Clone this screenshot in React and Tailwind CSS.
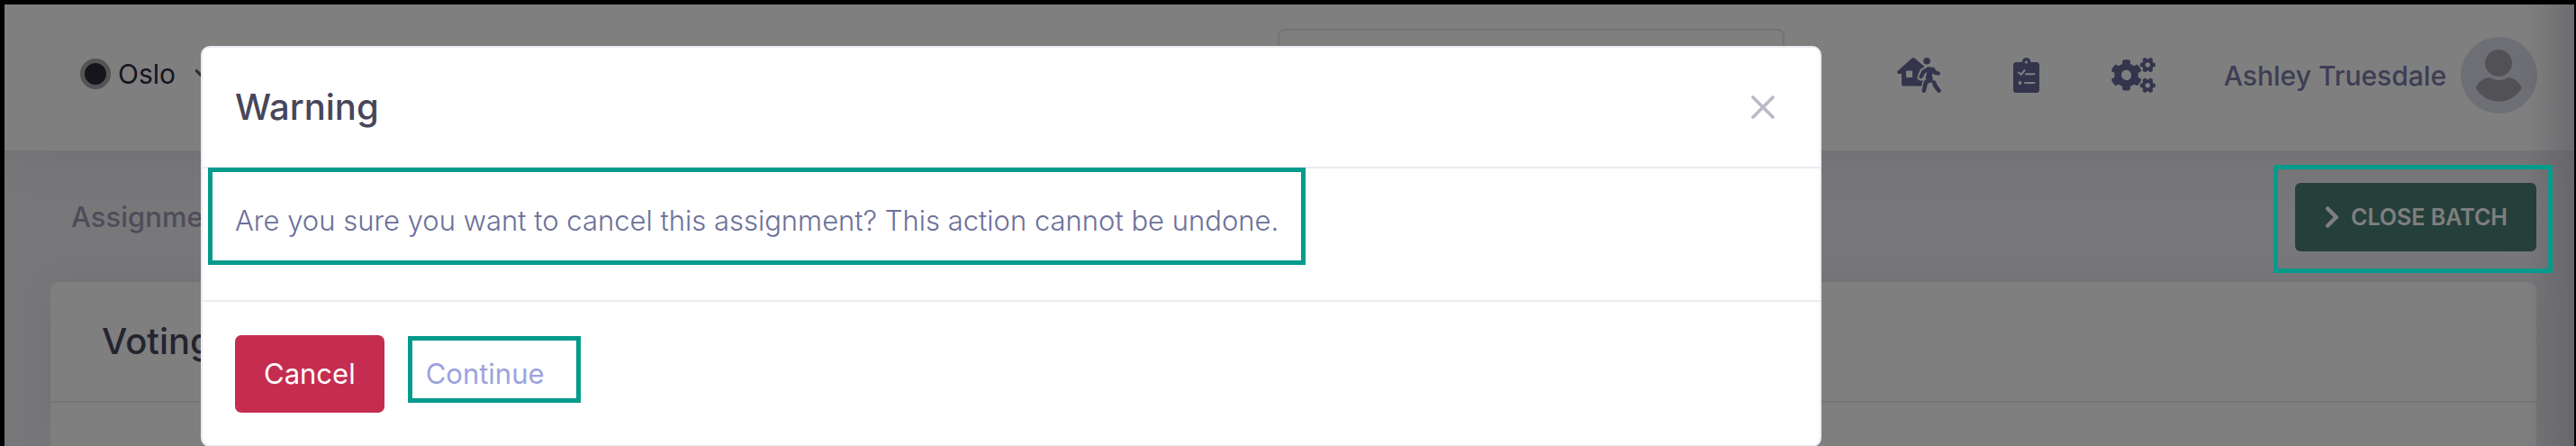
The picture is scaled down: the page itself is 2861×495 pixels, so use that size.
// App.jsx
import { FaCogs, FaChevronDown, FaChevronRight } from 'react-icons/fa';

function HouseLeaveIcon() {
    return (
        <svg viewBox="0 0 49 39" className="w-[49px] h-[39px]" aria-hidden="true">
            <path
                fill="currentColor"
                fillRule="evenodd"
                d="M16.6 0.6 Q18 -0.6 19.4 0.6 L30 9.6 V31.5 H7.5 Q5 31.5 5 29 V18 H2 Q-1.2 17.4 0.6 14.8 Z M11 14.5 Q10 14.5 10 15.5 V21 Q10 22 11 22 H16 Q17 22 17 21 V15.5 Q17 14.5 16 14.5 Z"
            />
            {/* contorno claro que separa la persona de la casa */}
            <g fill="none" stroke="#fff" strokeWidth="8" strokeLinecap="round" strokeLinejoin="round">
                <path d="M26.5 21.5 L29 15.5 L35.5 12.5 L40 13 L46 17" />
                <path d="M36.5 13 L33.5 22 L30 37" />
            </g>
            <circle cx="33" cy="3.8" r="6" fill="#fff" />
            <circle cx="33" cy="3.8" r="3.8" fill="currentColor" />
            <g fill="none" stroke="currentColor" strokeLinecap="round" strokeLinejoin="round">
                <path strokeWidth="4.4" d="M26.5 21 L29.5 15.5 L35 12.5 L40 13 L42 16.5 L45.6 17.4" />
                <path strokeWidth="6.4" d="M37 14.5 L35 22" />
                <path strokeWidth="4.6" d="M37 22 L37.5 25 L32 27 L29.8 36.6" />
                <path strokeWidth="4.6" d="M41 27.5 L42.5 31.5 L46.4 36.6" />
            </g>
        </svg>
    );
}

function ClipboardCheckIcon() {
    return (
        <svg viewBox="0 0 29 39" className="w-[29px] h-[39px]" aria-hidden="true">
            <rect y="5" width="29" height="34" rx="3.5" fill="currentColor" />
            <circle cx="14.5" cy="4.8" r="4.8" fill="currentColor" />
            <circle cx="14.5" cy="5" r="1.6" fill="#fff" />
            <g fill="none" stroke="#fff" strokeWidth="2" strokeLinecap="round" strokeLinejoin="round">
                <path d="M6 16.5 L8.6 18.8 L12.6 14" />
                <path d="M14 18.2 H23.5" />
                <path d="M13 28 H23.5" />
            </g>
            <circle cx="7.4" cy="28" r="1.9" fill="#fff" />
        </svg>
    );
}

function Avatar() {
    return (
        <svg viewBox="0 0 85 85" className="w-[85px] h-[85px]" aria-hidden="true">
            <circle cx="42.5" cy="42.5" r="42.5" fill="#dcdee8" />
            <circle cx="42" cy="29" r="15" fill="#a5a3ad" />
            <path
                fill="#a5a3ad"
                d="M32 45 Q42 51.5 53 45 Q63 46 68 56.5 Q59 71 42.5 71.5 Q25 71 16.5 56.5 Q21.5 46 32 45 Z"
            />
        </svg>
    );
}

export default function App() {
    return (
        <div className="relative h-screen overflow-hidden bg-[#f0f0f4] font-[Inter,sans-serif] text-[31px] leading-[42px]">
            <div className="flex h-full flex-col border-t-[5px] border-l-[5px] border-r-2 border-black">
                <header className="flex h-[162px] shrink-0 items-start bg-white pl-[84px] pr-[41px] shadow-[0_8px_60px_rgba(60,60,80,0.08)]">
                    <button type="button" className="mt-[56px] flex items-center text-[30px] text-[#2a2a3c]">
                        <span className="mr-2 size-[34px] rounded-full border-[5px] border-[#a8a8a8] bg-[#2a2a3c]" />
                        Oslo
                        <FaChevronDown className="ml-5 size-5 text-[#5c5c68]" />
                    </button>
                    <input
                        type="text"
                        aria-label="Search"
                        className="mt-[27px] ml-auto h-[86px] w-[563px] rounded-lg border-2 border-[#e4e4ec] px-6"
                    />
                    <nav className="mt-[59px] ml-[125px] flex gap-20 text-[#68699a]">
                        <a href="#assignments" aria-label="Assignments"><HouseLeaveIcon /></a>
                        <a href="#tasks" aria-label="Tasks"><ClipboardCheckIcon /></a>
                        <a href="#settings" aria-label="Settings"><FaCogs className="w-[49px] h-[39px]" /></a>
                    </nav>
                    <a href="#profile" className="mt-9 ml-[76px] flex items-center gap-4 text-[30px] font-medium text-[#7a7ba9]">
                        Ashley Truesdale
                        <Avatar />
                    </a>
                </header>

                <div className="flex h-[146px] shrink-0 items-start justify-between pt-9 pl-[74px] pr-[42px]">
                    <h2 className="mt-[17px] font-medium text-[#9a9bb2]">Assignments</h2>
                    <button
                        type="button"
                        className="flex h-[76px] w-[268px] items-center justify-center gap-3 rounded-md bg-[#4a8076] text-[25px] font-semibold text-white"
                    >
                        <FaChevronRight className="h-[28px] w-[18px]" />
                        CLOSE BATCH
                    </button>
                </div>

                <main className="mr-[42px] ml-[51px] flex-1 rounded-t-[10px] bg-white shadow-[0_0_40px_rgba(82,63,105,0.08)]">
                    <h1 className="border-b-2 border-[#ebebf0] py-[41px] pl-[57px] text-[40px] leading-[50px] font-medium text-[#4a4860]">
                        Voting
                    </h1>
                </main>
            </div>

            <div className="absolute inset-y-0 right-0 w-14 bg-linear-to-l from-[#3c3c64]/20 to-transparent" />

            <div className="absolute inset-0 border-t-[5px] border-l-[5px] border-r-2 border-black bg-black/50">
                <div className="pointer-events-none absolute top-[178px] right-6 h-[120px] w-[310px] border-[5px] border-[#059b8c]" />

                <div
                    role="dialog"
                    aria-modal="true"
                    aria-labelledby="warning-title"
                    className="relative mt-[46px] ml-[218px] max-w-[1800px] rounded-[10px] border-2 border-[#ebebf2] bg-white"
                >
                    <div className="flex h-[134px] items-center justify-between border-b-2 border-[#ebebf2] px-9">
                        <h3 id="warning-title" className="text-[40px] font-medium text-[#48465b]">Warning</h3>
                        <button type="button" aria-label="Close" className="p-[14px] text-[#b9b9c8]">
                            <svg viewBox="0 0 26 26" className="size-[26px]" aria-hidden="true">
                                <path d="M2 2 L24 24 M24 2 L2 24" stroke="currentColor" strokeWidth="3.6" strokeLinecap="round" />
                            </svg>
                        </button>
                    </div>
                    <div className="h-[148px] border-b-2 border-[#ebebf2] px-9 pt-[37px]">
                        <p className="relative w-fit font-light text-[#6c7099]">
                            Are you sure you want to cancel this assignment? This action cannot be undone.
                            <span className="pointer-events-none absolute -top-[38px] -bottom-[28px] -left-[30px] -right-[30px] border-[5px] border-[#059b8c]" />
                        </p>
                    </div>
                    <div className="flex gap-[14px] px-9 pt-[37px] pb-9">
                        <button type="button" className="h-[86px] rounded-[7px] bg-[#c52d50] px-8 text-white">
                            Cancel
                        </button>
                        <button type="button" className="relative h-[86px] px-8 text-[#9ca3dd]">
                            Continue
                            <span className="pointer-events-none absolute top-px left-3 h-[74px] w-[192px] border-[5px] border-[#059b8c]" />
                        </button>
                    </div>
                </div>
            </div>
        </div>
    );
}
